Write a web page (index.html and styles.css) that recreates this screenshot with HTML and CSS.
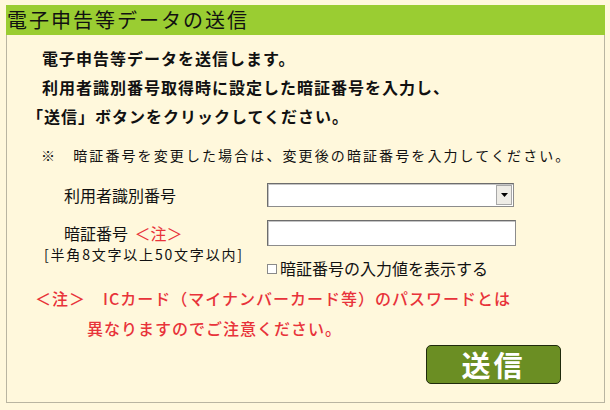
FILE: index.html
```html
<!DOCTYPE html>
<html lang="ja">
<head>
<meta charset="utf-8">
<title>電子申告等データの送信</title>
<link rel="stylesheet" href="styles.css">
</head>
<body>
<div class="panel">
  <div class="title">電子申告等データの送信</div>
  <div class="body">
    <div class="intro">
      <p class="ind">電子申告等データを送信します。</p>
      <p class="ind">利用者識別番号取得時に設定した暗証番号を入力し、</p>
      <p>「送信」ボタンをクリックしてください。</p>
    </div>
    <p class="note">※　暗証番号を変更した場合は、変更後の暗証番号を入力してください。</p>
    <div class="form">
      <div class="label row1">利用者識別番号</div>
      <div class="select">
        <span class="arrow"><svg width="7" height="4" viewBox="0 0 7 4"><path d="M0 0H7L3.5 4Z" fill="#000"/></svg></span>
      </div>
      <div class="cell">
        <div class="label row2">暗証番号 <span class="red">＜注＞</span></div>
        <div class="hint">[半角8文字以上50文字以内]</div>
      </div>
      <div class="cell">
        <input class="pw" type="password">
        <label class="show"><input type="checkbox" class="cb">暗証番号の入力値を表示する</label>
      </div>
    </div>
    <div class="caution">
      <p>＜注＞　ICカード（マイナンバーカード等）のパスワードとは</p>
      <p class="ind2">異なりますのでご注意ください。</p>
    </div>
    <div class="actions"><button class="send" type="button">送信</button></div>
  </div>
</div>
</body>
</html>
```
FILE: styles.css
```css
* { box-sizing: border-box; }
body {
  margin: 0;
  background: #fff8dc;
  font-family: "Noto Sans CJK JP", sans-serif;
  color: #111;
}
p { margin: 0; }
.panel {
  width: 599px;
  margin: 5px 0 0 6px;
}
.title {
  height: 30px;
  background: #9acd32;
  font-size: 20px;
  line-height: 30px;
  letter-spacing: 2px;
  padding-left: 1px;
  white-space: nowrap;
}
.body {
  height: 368px;
  border: 1px solid #b9b5a1;
  border-top: 0;
}
.intro {
  padding-top: 9px;
  padding-left: 20px;
  font-size: 16px;
  font-weight: bold;
  line-height: 29px;
  letter-spacing: 1px;
  white-space: nowrap;
}
.intro .ind { padding-left: 15px; }
.note {
  margin-top: 14px;
  padding-left: 34px;
  font-size: 14px;
  line-height: 20px;
  letter-spacing: 2.1px;
  white-space: nowrap;
}
.form {
  display: grid;
  grid-template-columns: 223px 249px;
  row-gap: 13px;
  align-items: start;
  margin-top: 18px;
  padding-left: 37px;
}
.label {
  font-size: 16px;
  padding-left: 20px;
  white-space: nowrap;
}
.row1 { line-height: 24px; }
.row2 { line-height: 26px; }
.red { color: #e8333a; margin-left: 3px; }
.hint {
  font-size: 14px;
  line-height: 16px;
  letter-spacing: 1.8px;
  white-space: nowrap;
}
.select {
  width: 247px;
  height: 24px;
  background: #fff;
  border: 1px solid #8c8c8c;
  border-top-color: #6d6d6d;
  border-left-color: #6d6d6d;
  box-shadow: inset 1px 1px 0 #c4c4c4;
  display: flex;
  justify-content: flex-end;
  align-items: center;
  padding-right: 1px;
}
.arrow {
  width: 16px;
  height: 20px;
  background: #eeece6;
  border: 1px solid #a8a8a8;
  display: flex;
  align-items: center;
  justify-content: center;
}
.pw {
  display: block;
  width: 249px;
  height: 26px;
  margin: 0;
  background: #fff;
  border: 1px solid #8c8c8c;
  border-top-color: #6d6d6d;
  border-left-color: #6d6d6d;
  box-shadow: inset 1px 1px 0 #c4c4c4;
  outline: none;
}
.show {
  display: flex;
  align-items: center;
  margin-top: 14px;
  height: 16px;
  font-size: 16px;
  line-height: 16px;
  white-space: nowrap;
}
.cb {
  appearance: none;
  -webkit-appearance: none;
  width: 10px;
  height: 10px;
  margin: 1px 3px 0 0;
  background: #fff;
  border: 1px solid #8a8a8a;
}
.caution {
  margin-top: 7px;
  padding-left: 28px;
  color: #e8333a;
  font-size: 16px;
  font-weight: 500;
  line-height: 30px;
  letter-spacing: 1px;
  white-space: nowrap;
}
.caution .ind2 { padding-left: 52px; }
.actions {
  display: flex;
  justify-content: flex-end;
  padding-right: 43px;
  margin-top: 2px;
}
.send {
  width: 135px;
  height: 39px;
  padding: 0;
  background: #6b8e23;
  border: 1px solid #1f2a0c;
  border-radius: 5px;
  color: #fff;
  font-family: "Noto Sans CJK JP", sans-serif;
  font-size: 29px;
  font-weight: bold;
  line-height: 37px;
  letter-spacing: 3px;
}
```
